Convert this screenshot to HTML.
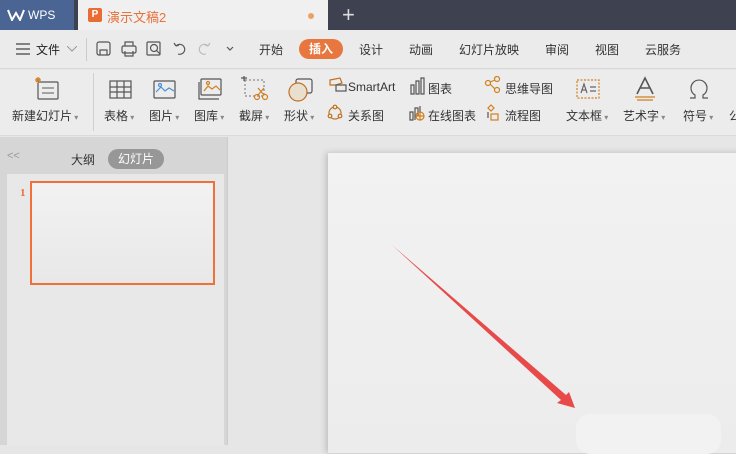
<!DOCTYPE html><html><head><meta charset="utf-8"><style>
*{margin:0;padding:0;box-sizing:border-box}
body{width:736px;height:445px;overflow:hidden;position:relative;background:#e6e6e6;font-family:"Liberation Sans","Noto Sans CJK SC",sans-serif;color:#333}
.a{position:absolute;white-space:nowrap}
.t{font-size:12px}
.ic{position:absolute}
</style></head><body>
<div class="a" style="left:0;top:0;width:736px;height:30px;background:#3d4150"></div>
<div class="a" style="left:0;top:0;width:74px;height:30px;background:#4a6594"></div>
<svg class="ic" style="left:7px;top:9px" width="18" height="12"><path d="M1 1 L5 11 L9 4 L13 11 L17 1" stroke="#fff" stroke-width="2" fill="none"/></svg>
<div class="a" style="left:28px;top:8px;color:#fff;font-size:12px">WPS</div>
<div class="a" style="left:78px;top:0;width:250px;height:30px;background:#f0f0f0"></div>
<div class="a" style="left:88px;top:8px;width:14px;height:14px;background:#ea6c35;border-radius:2px;color:#fff;font-size:10px;text-align:center;line-height:14px;font-weight:bold">P</div>
<div class="a" style="left:107px;top:7px;color:#e8713c;font-size:13px">演示文稿2</div>
<div class="a" style="left:308px;top:13px;width:6px;height:6px;border-radius:3px;background:#eda160"></div>
<div class="a" style="left:342px;top:2px;color:#ddd;font-size:22px;font-weight:300">+</div>
<div class="a" style="left:0;top:30px;width:736px;height:39px;background:#ebebeb;border-bottom:1px solid #d8d8d8"></div>
<svg class="ic" style="left:16px;top:43px" width="14" height="12"><path d="M0 1H14M0 6H14M0 11H14" stroke="#444" stroke-width="1.2"/></svg>
<div class="a t" style="left:36px;top:41px;color:#222">文件</div>
<svg class="ic" style="left:67px;top:46px" width="10" height="6"><path d="M0 0L5 5L10 0" stroke="#999" fill="none"/></svg>
<div class="a" style="left:86px;top:38px;width:1px;height:23px;background:#ccc"></div>
<svg class="ic" style="left:96px;top:41px" width="140" height="16" fill="none" stroke="#555" stroke-width="1.2">
<rect x="1" y="1" width="13" height="13" rx="2"/><path d="M4 14V9H11V14"/>
<rect x="26" y="5" width="14" height="7" rx="1.5"/><path d="M29 5V1H37V5M29 10V15H37V10"/>
<rect x="51" y="1" width="13" height="13" rx="1"/><circle cx="58" cy="7" r="3.5"/><path d="M60.5 9.5L64 13"/>
<path d="M80 5A5 5 0 1 1 82 13M80 5L78 2M80 5L83 4"/>
<path stroke="#bbb" d="M112 5A5 5 0 1 0 110 13M112 5L114 2M112 5L109 4"/>
<path d="M131 6L134 9L137 6"/>
</svg>
<div class="a t" style="left:259px;top:41px">开始</div>
<div class="a" style="left:299px;top:39px;width:44px;height:20px;border-radius:10px;background:#e8773f;color:#fff;font-size:12px;font-weight:bold;text-align:center;line-height:20px">插入</div>
<div class="a t" style="left:359px;top:41px">设计</div>
<div class="a t" style="left:409px;top:41px">动画</div>
<div class="a t" style="left:459px;top:41px">幻灯片放映</div>
<div class="a t" style="left:545px;top:41px">审阅</div>
<div class="a t" style="left:595px;top:41px">视图</div>
<div class="a t" style="left:645px;top:41px">云服务</div>
<div class="a" style="left:0;top:70px;width:736px;height:66px;background:#ececec;border-bottom:1px solid #dadada"></div>
<div class="a" style="left:93px;top:73px;width:1px;height:58px;background:#d0d0d0"></div>
<svg class="ic" style="left:0;top:76px" width="736" height="28" fill="none" stroke="#555" stroke-width="1.2">
<rect x="38" y="6" width="20" height="17" rx="1"/><path d="M42 12H54M42 17H54" stroke="#777"/><path d="M36 2L40 6M40 2L36 6M38 1V7M35 4H41" stroke="#d08020"/>
<rect x="110" y="5" width="21" height="17"/><path d="M110 11H131M110 16H131M117 5V22M124 5V22"/>
<rect x="154" y="5" width="21" height="17" rx="1"/><path d="M156 16L161 11L165 15L169 12L174 15" stroke="#4a8fd8"/><circle cx="160" cy="9" r="1.5" stroke="#4a8fd8"/>
<rect x="201" y="3" width="20" height="16" rx="1"/><path d="M199 6V23H219"/><path d="M204 15L208 10L212 13L216 10L220 14" stroke="#d08020"/><circle cx="208" cy="7" r="1.5" stroke="#d08020"/>
<rect x="245" y="4" width="19" height="16" stroke="#888" stroke-dasharray="2 2"/><path d="M244 0V5M241 2H247"/><circle cx="257" cy="21" r="2.5" stroke="#d08020"/><circle cx="265" cy="21" r="2.5" stroke="#d08020"/><path d="M258 19L264 12M264 19L258 12" stroke="#d08020"/>
<rect x="296" y="3" width="16" height="14" rx="2"/><circle cx="298" cy="16" r="9" fill="#e8dfcf" stroke="#c07020"/>
<path d="M330 4L340 2L342 7L336 9L330 9Z" stroke="#c07020"/><rect x="336" y="9" width="10" height="6"/>
<path d="M411 9V18H414V9ZM416 5V18H419V5ZM421 2V18H424V2Z" stroke="#555"/>
<circle cx="488" cy="7" r="2.5" stroke="#d08020"/><circle cx="497" cy="3" r="2.5" stroke="#d08020"/><circle cx="497" cy="14" r="2.5" stroke="#d08020"/><path d="M490 6L495 4M490 8L495 13" stroke="#d08020"/>
<rect x="577" y="4" width="22" height="18" stroke="#d08020" stroke-dasharray="2 1.5"/><path d="M581 17L584 8L587 17M582 14H586M590 11H596M590 15H596" stroke="#666"/>
<path d="M637 18L645 2L653 18M640 12H650" stroke-width="1.6"/><path d="M635 21H655M637 24H653" stroke="#d08020"/>
<path d="M690 22H695V19A8 8 0 1 1 703 19V22H708"/>
</svg>
<svg class="ic" style="left:0;top:104px" width="736" height="20" fill="none" stroke-width="1.2">
<circle cx="335" cy="9" r="6" stroke="#c07020"/><circle cx="335" cy="3" r="1.8" fill="#ececec" stroke="#c07020"/><circle cx="330" cy="12" r="1.8" fill="#ececec" stroke="#c07020"/><circle cx="340" cy="12" r="1.8" fill="#ececec" stroke="#c07020"/>
<path d="M410 16V8H413V16ZM415 16V4H418V12M420 2V9" stroke="#555"/><circle cx="420" cy="12" r="4" stroke="#d08020"/><path d="M416 12H424M420 8V16" stroke="#d08020"/>
<path d="M488 4L491 1L494 4L491 7Z" stroke="#d08020"/><path d="M488 8V14" stroke="#555"/><rect x="491" y="10" width="7" height="6" stroke="#d08020"/>
</svg>
<div class="a t" style="left:12px;top:107px">新建幻灯片<span style="font-size:8px;color:#888"> ▾</span></div>
<div class="a t" style="left:104px;top:107px">表格<span style="font-size:8px;color:#888"> ▾</span></div>
<div class="a t" style="left:149px;top:107px">图片<span style="font-size:8px;color:#888"> ▾</span></div>
<div class="a t" style="left:194px;top:107px">图库<span style="font-size:8px;color:#888"> ▾</span></div>
<div class="a t" style="left:239px;top:107px">截屏<span style="font-size:8px;color:#888"> ▾</span></div>
<div class="a t" style="left:284px;top:107px">形状<span style="font-size:8px;color:#888"> ▾</span></div>
<div class="a t" style="left:348px;top:80px">SmartArt</div>
<div class="a t" style="left:348px;top:107px">关系图</div>
<div class="a t" style="left:428px;top:80px">图表</div>
<div class="a t" style="left:428px;top:107px">在线图表</div>
<div class="a t" style="left:505px;top:80px">思维导图</div>
<div class="a t" style="left:505px;top:107px">流程图</div>
<div class="a t" style="left:566px;top:107px">文本框<span style="font-size:8px;color:#888"> ▾</span></div>
<div class="a t" style="left:623px;top:107px">艺术字<span style="font-size:8px;color:#888"> ▾</span></div>
<div class="a t" style="left:683px;top:107px">符号<span style="font-size:8px;color:#888"> ▾</span></div>
<div class="a t" style="left:729px;top:107px">公</div>
<div class="a" style="left:0;top:137px;width:228px;height:308px;background:#d6d6d6;border-right:1px solid #ccc"></div>
<div class="a" style="left:7px;top:174px;width:217px;height:271px;background:#e8e8e8"></div>
<div class="a" style="left:7px;top:150px;color:#999;font-size:11px">&lt;&lt;</div>
<div class="a t" style="left:71px;top:151px">大纲</div>
<div class="a" style="left:108px;top:149px;width:56px;height:20px;border-radius:10px;background:#979797;color:#fff;font-size:12px;text-align:center;line-height:20px">幻灯片</div>
<div class="a" style="left:20px;top:187px;color:#e8713c;font-size:11px;font-weight:bold;font-family:'Liberation Serif',serif">1</div>
<div class="a" style="left:30px;top:181px;width:185px;height:104px;border:2px solid #ef7039;background:linear-gradient(#f2f2f2,#e9e8e8)"></div>
<div class="a" style="left:328px;top:153px;width:420px;height:300px;background:linear-gradient(#f2f2f2,#ececec);box-shadow:-2px 0 6px rgba(0,0,0,.18)"></div>
<div class="a" style="left:576px;top:414px;width:145px;height:40px;border-radius:14px;background:#f2f2f2"></div>
<svg class="ic" style="left:0;top:0" width="736" height="445"><polygon points="392,245 566,395 569,392 575,408 557,403 561,400" fill="#e84a4a"/></svg>
</body></html>
